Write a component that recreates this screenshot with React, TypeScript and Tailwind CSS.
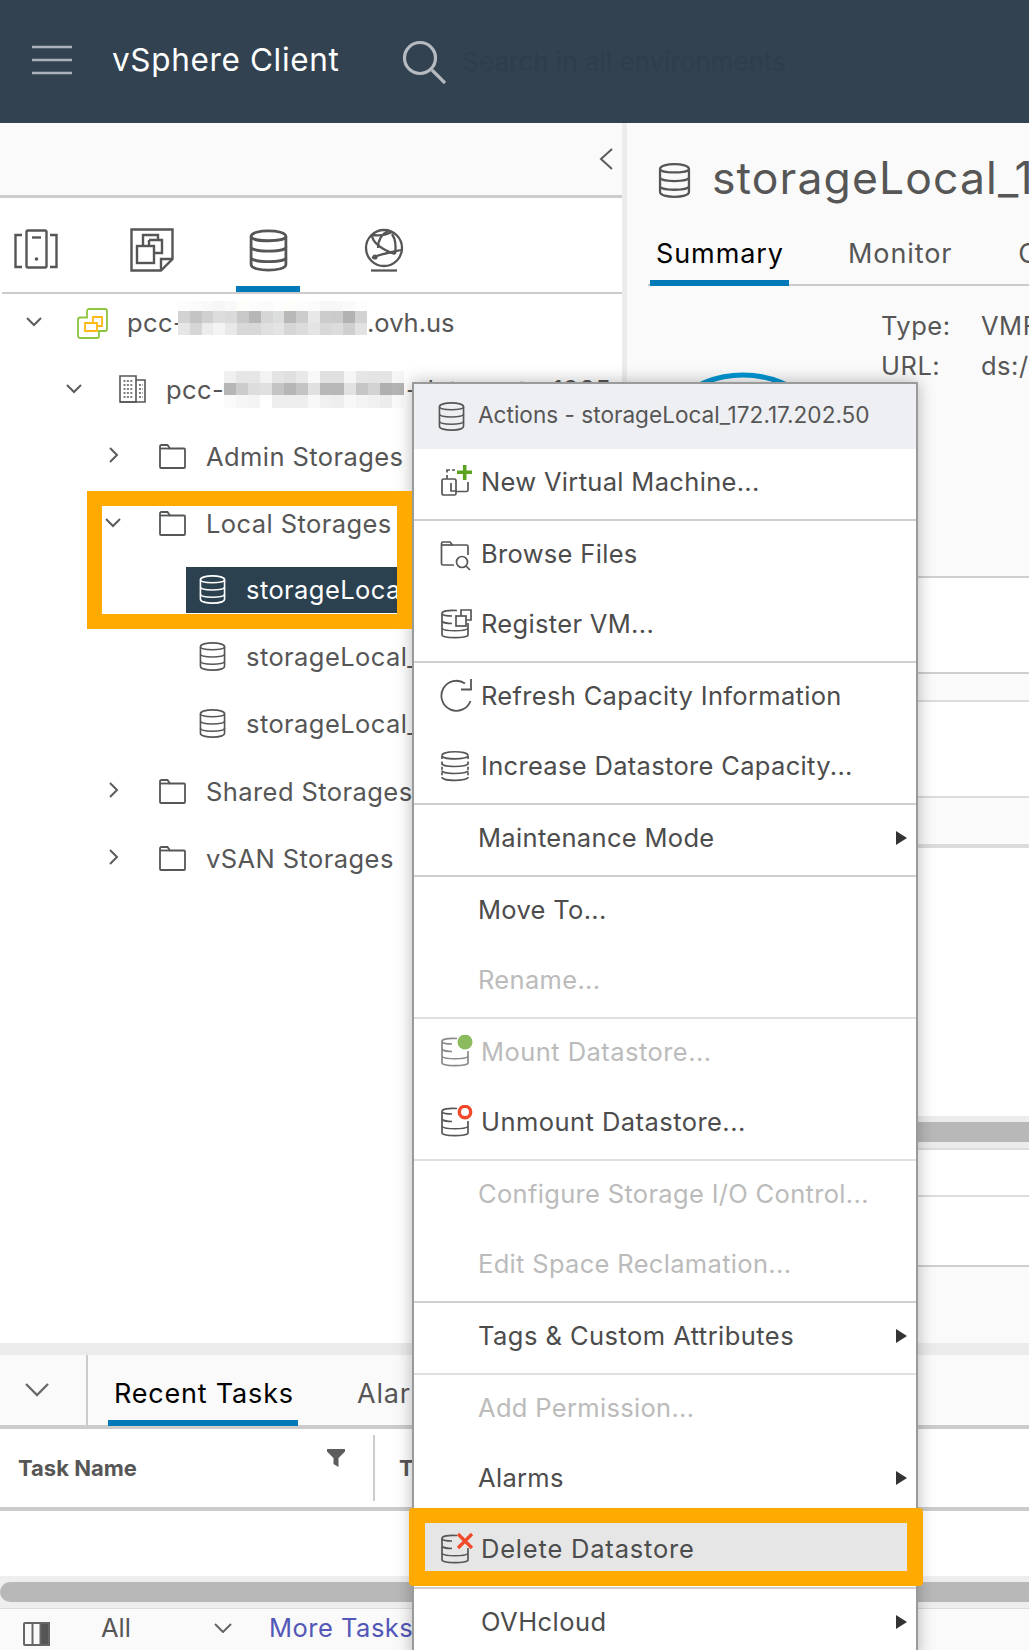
import React from "react";

const G = "#565656";

function Chevron({ dir, className }: { dir: "down" | "right" | "left"; className?: string }) {
  const pts = dir === "down" ? "3,7 10,14 17,7" : dir === "right" ? "7,3 14,10 7,17" : "15,1 4,11 15,21";
  return (
    <svg viewBox="0 0 20 22" className={className} fill="none" stroke="#5c5c5c" strokeWidth="2">
      <polyline points={pts} />
    </svg>
  );
}

function Db({ className, color = G, sw = 2 }: { className?: string; color?: string; sw?: number }) {
  return (
    <svg viewBox="0 0 28 32" className={className} fill="none" stroke={color} strokeWidth={sw}>
      <path d="M1.5 6C1.5 0.5 26.5 0.5 26.5 6V26C26.5 31.5 1.5 31.5 1.5 26Z" />
      <path d="M1.5 6C1.5 10 26.5 10 26.5 6" />
      <path d="M1.5 13.5C1.5 17.5 26.5 17.5 26.5 13.5" />
      <path d="M1.5 21C1.5 25 26.5 25 26.5 21" />
    </svg>
  );
}

function Folder({ className }: { className?: string }) {
  return (
    <svg viewBox="0 0 27 25" className={className} fill="none" stroke={G} strokeWidth="1.8">
      <path d="M1 2.5C1 1.5 1.5 1 2.5 1H8.5L11 4.5H25C25.6 4.5 26 5 26 5.5V23C26 23.6 25.6 24 25 24H2C1.4 24 1 23.6 1 23Z" />
      <path d="M1 4.5H11" />
    </svg>
  );
}

function Mosaic({ rows, widths, cell, className }: { rows: string[][]; widths: number[]; cell: number; className?: string }) {
  let y = 0;
  const total = widths.reduce((a, b) => a + b, 0);
  return (
    <svg viewBox={`0 0 ${rows[0].length * cell} ${total}`} className={className} shapeRendering="crispEdges">
      {rows.map((r, ri) => {
        const top = y;
        y += widths[ri];
        return r.map((c, ci) => <rect key={`${ri}-${ci}`} x={ci * cell} y={top} width={cell} height={widths[ri]} fill={c} />);
      })}
    </svg>
  );
}

const mosaicA = [
  ["#fcfcfc","#fbfbfb","#f9f9f9","#f6f6f6","#f9f9f9","#fdfdfa","#fcfcfc","#fbfbfb","#fdfdfd","#fdfdfa","#fcfcfc","#fbfbfb","#f7f7f7","#f8f8f8","#fafafa","#fdfdfd"],
  ["#d2d2d2","#c4c4c4","#d0d0d0","#dddddd","#dadada","#c8c8c8","#b6b6b6","#d6d6d6","#dcdede","#b8b8b8","#cccccc","#e8e8e8","#cccccc","#cbcbcb","#b2b2b2","#d2d2d2"],
  ["#e6e6e6","#d6d6d6","#ececec","#f4f4f4","#e8e8e8","#d8d8d8","#d8d8d8","#e0e0e0","#e4e4e4","#d6d6d6","#dcdcdc","#e4e4e4","#d8d8d8","#dcdcdc","#cfcfcf","#e2e2e2"],
];
const mosaicB = [
  ["#f0f0f0","#e6e6e6","#e6e6e6","#f3f3f3","#e4e4e4","#e0e0e0","#e8e8e8","#f8f8f8","#e0e0e0","#e0e0e0","#f6f6f6","#e6e6e6","#e4e4e4","#e4e4e4","#f6f6f6"],
  ["#b6b6b6","#cccccc","#dddddd","#e0e0e0","#c4c4c4","#b6b6b6","#c4c4c4","#e0e0e0","#b8b8b8","#b8b8b8","#e2e2e2","#c6c6c6","#d2d2d2","#b0b0b0","#b4b4b4"],
  ["#fafafa","#f6f6f6","#f4f4f4","#ffffff","#eeeeee","#eeeeee","#eeeeee","#f8f8f8","#f0f0f0","#eeeeee","#f8f8f8","#f4f4f4","#f0f0f0","#ececec","#fafafa"],
];

function TreeRow({ pad, gapA, gapB, chevron, icon, children }: { pad: string; gapA: string; gapB: string; chevron?: "down" | "right"; icon: React.ReactNode; children: React.ReactNode }) {
  return (
    <div className={`h-[67px] flex items-center whitespace-nowrap text-[25.5px] tracking-[0.42px] text-[#565656] ${pad}`}>
      <div className="w-[20px] h-[22px] shrink-0">{chevron && <Chevron dir={chevron} className="w-[20px] h-[22px]" />}</div>
      <div className={`shrink-0 ${gapA}`}>{icon}</div>
      <div className={`mt-[4px] ${gapB}`}>{children}</div>
    </div>
  );
}

function Arrow() {
  return (
    <svg viewBox="0 0 11 14" className="w-[11px] h-[14px] absolute right-[9px] top-[26px]" fill="#333">
      <polygon points="0,0 11,7 0,14" />
    </svg>
  );
}

function Item({ label, icon, disabled, arrow, wide }: { label: string; icon?: React.ReactNode; disabled?: boolean; arrow?: boolean; wide?: boolean }) {
  return (
    <div className={`relative h-[70px] pb-[4px] flex items-center whitespace-nowrap text-[25.5px] ${wide ? "tracking-[0.45px]" : "tracking-[0.32px]"} ${disabled ? "text-[#bbbbbb]" : "text-[#4c4c4c]"} ${icon ? "pl-[26px]" : "pl-[64px]"}`}>
      {icon && <div className="w-[34px] mr-[7px] shrink-0 flex items-center">{icon}</div>}
      <span>{label}</span>
      {arrow && <Arrow />}
    </div>
  );
}

function Sep({ light }: { light?: boolean }) {
  return <div className={`h-[2px] ${light ? "bg-[#e0e0e0]" : "bg-[#cfcfcf]"}`} />;
}

function DbBase({ children, dim }: { children?: React.ReactNode; dim?: boolean }) {
  const c = dim ? "#8a8a8a" : G;
  return (
    <svg viewBox="0 0 34 34" className="w-[34px] h-[34px]" fill="none" stroke={c} strokeWidth="1.7">
      <path d="M17 3.5C8 2.8 2 4 2 6.5V28C2 31.5 28 31.5 28 28V16" />
      <path d="M2 7C3 8.4 7 9 12 9" />
      <path d="M2 14.5C4 16 8 16.5 12 16.5" />
      <path d="M2 21.5C5 24.5 25 24.5 28 21.5" />
      {children}
    </svg>
  );
}

function IconNew() {
  return (
    <svg viewBox="0 0 34 34" className="w-[34px] h-[34px]" fill="none" stroke={G} strokeWidth="1.7">
      <path d="M2 16C2 15 2.5 14 4 14H14.5C15.5 14 16 15 16 16V28.5C16 29.5 15.5 30 14.5 30H4C3 30 2 29.5 2 28.5Z" />
      <path d="M7 14V10M7 7.5V5H10M12 5H15" />
      <path d="M28 17V25C28 26 27.5 26.5 26.5 26.5H16" />
      <path d="M11 18V26H16" />
      <path d="M24.7 0V15M17 7.3H32" stroke="#5aa220" strokeWidth="3.6" />
    </svg>
  );
}

function IconBrowse() {
  return (
    <svg viewBox="0 0 34 34" className="w-[34px] h-[34px]" fill="none" stroke={G} strokeWidth="1.7">
      <path d="M14 28H3C2 28 1.5 27.5 1.5 26.5V6.5C1.5 5.5 2 5 3 5H10L12.5 8H26.5C27.5 8 28 8.5 28 9.5V18" />
      <path d="M1.5 8H12.5" />
      <circle cx="22" cy="25" r="5.5" />
      <path d="M26 29L30 33" />
    </svg>
  );
}

function IconRegister() {
  return (
    <DbBase>
      <rect x="16" y="9" width="10" height="10" fill="#fff" />
      <path d="M21 9V3H31V13H26" />
    </DbBase>
  );
}

function IconRefresh() {
  return (
    <svg viewBox="0 0 34 34" className="w-[34px] h-[34px]" fill="none" stroke={G} strokeWidth="1.8">
      <path d="M25 4.5A15 15 0 1 0 30.5 22" />
      <path d="M31 0V10.5H21" />
    </svg>
  );
}

function IconIncrease() {
  return (
    <svg viewBox="0 0 34 34" className="w-[34px] h-[34px]" fill="none" stroke={G} strokeWidth="1.7">
      <path d="M2 6.5C2 1.5 28 1.5 28 6.5" />
      <path d="M2 6.5C2 11 28 11 28 6.5" />
      <path d="M2 14.5C2 18.5 28 18.5 28 14.5" />
      <path d="M2 21.5C2 25.5 28 25.5 28 21.5" />
      <path d="M2 28C2 32.5 28 32.5 28 28" />
      <path d="M2 7V28M28 7V28" strokeDasharray="3 2.4" />
    </svg>
  );
}

function IconTree({ kind }: { kind: "hosts" | "vms" }) {
  if (kind === "hosts")
    return (
      <svg viewBox="0 0 44 40" className="w-[44px] h-[40px]" fill="none" stroke={G} strokeWidth="2.4">
        <rect x="12.5" y="1.5" width="20" height="37" rx="1.5" />
        <path d="M18 8.5H27" />
        <circle cx="22.5" cy="30" r="1.8" fill={G} stroke="none" />
        <path d="M8 6H1.5V38H8" />
        <path d="M36 6H42.5V38H36" />
      </svg>
    );
  return (
    <svg viewBox="0 0 44 44" className="w-[44px] h-[44px]" fill="none" stroke={G} strokeWidth="2.4">
      <path d="M1.5 1.5H42.5V31L31 42.5H1.5Z" />
      <path d="M31 42.5V31H42.5" />
      <rect x="7" y="18" width="17" height="17" />
      <path d="M13 18V7H28V12" />
      <path d="M19 12H32V25H24" />
      <path d="M19 12V18" />
    </svg>
  );
}

function IconGlobe() {
  return (
    <svg viewBox="0 0 40 44" className="w-[40px] h-[44px]" fill="none" stroke={G} strokeWidth="2.3">
      <circle cx="20" cy="20" r="18" />
      <path d="M8 7C14 8 22 7 28 4" />
      <path d="M8 7C8 14 18 22 31 26" />
      <path d="M24 3C18 6 14 12 14 20" />
      <path d="M37 22C28 24 16 26 8 30" />
      <path d="M28 6C32 12 32 20 31 26" />
      <circle cx="11" cy="29" r="2.6" fill={G} stroke="none" />
      <path d="M7 42.5H33" />
    </svg>
  );
}

function IconVc() {
  return (
    <svg viewBox="0 0 31 31" className="w-[31px] h-[31px]" fill="none" strokeWidth="1.8">
      <path d="M10 9.5V3C10 2 11 1 12 1H28C29 1 30 2 30 3V21C30 22 29 23 28 23H22V28C22 29 21 30 20 30H3C2 30 1 29 1 28V11.5C1 10.5 2 9.5 3 9.5Z" stroke="#8cc63f" />
      <path d="M16 15V9H25V18H20V23H8V15Z" stroke="#fdb913" />
      <path d="M16 15H20V18" stroke="#fdb913" />
    </svg>
  );
}

function IconDc() {
  return (
    <svg viewBox="0 0 27 29" className="w-[27px] h-[29px]" fill="none" stroke={G} strokeWidth="1.6">
      <path d="M1 28V2H17V28Z" />
      <path d="M17 6H26V28H1" />
      <path d="M4.5 7H14M4.5 11H14M4.5 15H14M4.5 19H14M4.5 23H14M20 11H24M20 15H24M20 19H24M20 23H24" strokeDasharray="2 1.4" />
    </svg>
  );
}

export default function App() {
  return (
    <div className="relative w-[1029px] h-[1650px] overflow-hidden bg-white font-['Inter','Liberation_Sans',sans-serif]">
      <header className="h-[123px] bg-[#324251] flex items-center">
        <svg viewBox="0 0 40 30" className="w-[40px] h-[30px] ml-[32px] mt-[-4px] shrink-0" stroke="#a9b2ba" strokeWidth="2.6">
          <path d="M0 2H40M0 15H40M0 28H40" />
        </svg>
        <span className="ml-[40px] text-[31.5px] tracking-[0.65px] text-white mt-[-4px]">vSphere Client</span>
        <svg viewBox="0 0 44 44" className="w-[44px] h-[44px] ml-[63px] shrink-0" fill="none" stroke="#b5bbc1" strokeWidth="3.2">
          <circle cx="18" cy="18" r="15.5" />
          <path d="M30 30L43 43" />
        </svg>
        <span className="ml-[16px] text-[26px] text-[#303d4a] mt-[-1px] whitespace-nowrap">Search in all environments</span>
      </header>

      <div className="h-[1220px] flex">
        <div className="w-[622px] shrink-0">
          <div className="h-[75px] bg-[#fafafa] border-b-[3px] border-[#cccccc] flex items-center justify-end pr-[5px]">
            <Chevron dir="left" className="w-[20px] h-[24px] mt-[-1px]" />
          </div>
          <div className="h-[96px] ml-[2px] border-b-[2px] border-[#cccccc] flex items-start pt-[31px] text-[#565656] relative">
            <div className="ml-[12px]"><IconTree kind="hosts" /></div>
            <div className="ml-[72px] mt-[-1px]"><IconTree kind="vms" /></div>
            <div className="ml-[62px] mt-[-1px] border-b-[6px] border-[#0079b8] w-[64px] h-[64px] flex justify-center">
              <Db className="w-[39px] h-[45px]" sw={2} />
            </div>
            <div className="ml-[64px] mt-[-1px]"><IconGlobe /></div>
          </div>
          <div className="mt-[-6px] relative">
            <TreeRow pad="pl-[24px]" gapA="ml-[33px] mt-[4px]" gapB="ml-[19px]" chevron="down" icon={<IconVc />}>
              <div className="flex items-center">
                <span className="w-[51px]">pcc-</span>
                <Mosaic rows={mosaicA} widths={[10, 12, 12]} cell={12} className="w-[189px] h-[34px] mt-[-11px]" />
                <span className="tracking-normal">.ovh.us</span>
              </div>
            </TreeRow>
            <TreeRow pad="pl-[64px]" gapA="ml-[35px]" gapB="ml-[20px]" chevron="down" icon={<IconDc />}>
              <div className="flex items-center">
                <span className="w-[55px]">pcc-</span>
                <Mosaic rows={mosaicB} widths={[12, 12, 13]} cell={12} className="w-[185px] h-[37px] mt-[-2px]" />
                <span>-datacenter1985</span>
              </div>
            </TreeRow>
            <TreeRow pad="pl-[103px]" gapA="ml-[36px] mt-[2px]" gapB="ml-[20px]" chevron="right" icon={<Folder className="w-[27px] h-[25px]" />}>Admin Storages</TreeRow>
            <TreeRow pad="pl-[103px]" gapA="ml-[36px] mt-[2px]" gapB="ml-[20px]" chevron="down" icon={<Folder className="w-[27px] h-[25px]" />}>Local Storages</TreeRow>
            <div className="h-[67px] flex items-center pl-[186px]">
              <div className="h-[46px] flex-1 bg-[#2b4150] flex items-center pl-[13px] text-[25.5px] tracking-[0.42px] text-white whitespace-nowrap">
                <Db className="w-[27px] h-[31px]" color="#ffffff" sw={1.7} />
                <span className="ml-[20px] mt-[2px]">storageLocal_172.17.202.50</span>
              </div>
            </div>
            <div className="h-[67px] flex items-center pl-[199px] text-[25.5px] tracking-[0.42px] text-[#565656] whitespace-nowrap">
              <Db className="w-[27px] h-[31px]" sw={1.7} />
              <span className="ml-[20px] mt-[2px]">storageLocal_172.17.202.51</span>
            </div>
            <div className="h-[67px] flex items-center pl-[199px] text-[25.5px] tracking-[0.42px] text-[#565656] whitespace-nowrap">
              <Db className="w-[27px] h-[31px]" sw={1.7} />
              <span className="ml-[20px] mt-[2px]">storageLocal_172.17.202.52</span>
            </div>
            <TreeRow pad="pl-[103px]" gapA="ml-[36px] mt-[2px]" gapB="ml-[20px]" chevron="right" icon={<Folder className="w-[27px] h-[25px]" />}>Shared Storages</TreeRow>
            <TreeRow pad="pl-[103px]" gapA="ml-[36px] mt-[2px]" gapB="ml-[20px]" chevron="right" icon={<Folder className="w-[27px] h-[25px]" />}>vSAN Storages</TreeRow>
          </div>
        </div>

        <div className="w-[5px] bg-[#ececec] shrink-0" />

        <div className="flex-1 min-w-0 bg-[#fafafa] overflow-hidden">
          <div className="h-[114px] flex items-center pl-[31px] whitespace-nowrap">
            <Db className="w-[33px] h-[37px] shrink-0" sw={2} />
            <span className="ml-[21px] mt-[-4px] text-[44.5px] tracking-[1.1px] text-[#565656]">storageLocal_172.17.202.50</span>
          </div>
          <div className="h-[49px] ml-[21px] border-b-[2px] border-[#cccccc] flex items-stretch whitespace-nowrap text-[27px] tracking-[0.9px] text-[#565656]">
            <div className="w-[139px] shrink-0 ml-[2px] h-[49px] border-b-[6px] border-[#0079b8] pl-[6px] text-black"><div className="mt-[-3px]">Summary</div></div>
            <div className="ml-[59px] mt-[-3px] shrink-0">Monitor</div>
            <div className="ml-[66px] mt-[-3px] shrink-0">Configure</div>
          </div>
          <div className="h-[290px] flex whitespace-nowrap">
            <svg viewBox="0 0 212 212" className="w-[212px] h-[212px] ml-[10px] mt-[86px] shrink-0" fill="none" stroke="#0095d3" strokeWidth="5">
              <circle cx="106" cy="106" r="103" />
            </svg>
            <div className="ml-[32px] mt-[20px] text-[25.5px] tracking-[0.5px] text-[#565656]">
              <div className="h-[40px] flex items-center"><span className="w-[100px]">Type:</span><span>VMFS 6</span></div>
              <div className="h-[40px] flex items-center"><span className="w-[100px]">URL:</span><span>ds:///vmfs/volumes/</span></div>
            </div>
          </div>
          <div className="h-[98px] bg-white border-y-[2px] border-[#cfcfcf]" />
          <div className="h-[26px]" />
          <div className="h-[98px] bg-white border-y-[2px] border-[#dcdcdc]" />
          <div className="h-[46px]" />
          <div className="h-[272px] bg-white border-t-[4px] border-[#dcdcdc]" />
          <div className="h-[32px] bg-[#ececec] flex items-center">
            <div className="h-[20px] w-full bg-[#b8b8b8]" />
          </div>
          <div className="h-[47px] bg-white border-t-[2px] border-[#dcdcdc]" />
          <div className="h-[70px] bg-white border-t-[2px] border-[#dcdcdc]" />
          <div className="h-[78px] border-t-[2px] border-[#cfcfcf]" />
        </div>
      </div>

      <div className="h-[12px] bg-[#ebebeb]" />
      <div className="h-[74px] bg-[#fafafa] border-b-[4px] border-[#cccccc] flex whitespace-nowrap">
        <div className="w-[88px] border-r-[2px] border-[#cccccc] flex items-center justify-center pr-[12px]">
          <svg viewBox="0 0 24 14" className="w-[24px] h-[14px]" fill="none" stroke="#6a6a6a" strokeWidth="2.4"><polyline points="1,1 12,12 23,1" /></svg>
        </div>
        <div className="ml-[20px] w-[190px] h-[71px] border-b-[6px] border-[#0079b8] pl-[6px] pt-[19px] text-[27px] tracking-[0.8px] text-black">Recent Tasks</div>
        <div className="ml-[59px] pt-[19px] text-[27px] tracking-[0.8px] text-[#565656]">Alarms</div>
      </div>
      <div className="h-[82px] border-b-[4px] border-[#cccccc] flex items-center whitespace-nowrap">
        <span className="ml-[18px] w-[309px] text-[22px] font-bold text-[#565656]">Task Name</span>
        <svg viewBox="0 0 18 18" className="w-[18px] h-[18px] mt-[-20px]" fill="#5c5c5c"><path d="M0 0H18V2.5L11.5 9V18L6.5 15V9L0 2.5Z" /></svg>
        <div className="ml-[28px] w-[2px] h-[66px] bg-[#cccccc]" />
        <span className="ml-[24px] text-[22px] font-bold text-[#565656]">Target</span>
      </div>
      <div className="h-[65px]" />
      <div className="h-[32px] bg-[#eeeeee] flex items-center">
        <div className="h-[20px] w-full rounded-l-full bg-[#b8b8b8]" />
      </div>
      <div className="h-[42px] bg-[#fafafa] border-t-[1px] border-[#dcdcdc] flex whitespace-nowrap relative">
        <svg viewBox="0 0 27 24" className="w-[27px] h-[24px] ml-[23px] mt-[13px] shrink-0" fill="none" stroke="#666" strokeWidth="2">
          <rect x="1" y="1" width="25" height="22" rx="1" />
          <path d="M9.5 1V23" />
          <rect x="17.5" y="1" width="8.5" height="22" fill="#555" />
        </svg>
        <span className="ml-[51px] text-[25.5px] text-[#565656]">All</span>
        <svg viewBox="0 0 18 10" className="w-[18px] h-[10px] ml-[83px] mt-[14px] shrink-0" fill="none" stroke="#666" strokeWidth="2"><polyline points="1,1 9,9 17,1" /></svg>
        <span className="ml-[37px] text-[25.5px] tracking-[0.5px] text-[#5257b8]">More Tasks</span>
      </div>

      <div className="absolute left-[412px] top-[382px] w-[506px] border-x-[2px] border-t-[2px] border-[#9a9a9a] bg-white shadow-[0_0_16px_rgba(0,0,0,0.28)]">
        <div className="h-[65px] bg-[#eeeff3] flex items-center pl-[24px] whitespace-nowrap text-[22.6px] text-[#565656]">
          <Db className="w-[27px] h-[31px] shrink-0" sw={1.7} />
          <span className="ml-[13px] mt-[-4px]">Actions - storageLocal_172.17.202.50</span>
        </div>
        <Item label="New Virtual Machine..." icon={<IconNew />} />
        <Sep />
        <Item label="Browse Files" icon={<IconBrowse />} />
        <Item label="Register VM..." icon={<IconRegister />} />
        <Sep />
        <Item label="Refresh Capacity Information" icon={<IconRefresh />} />
        <Item label="Increase Datastore Capacity..." icon={<IconIncrease />} />
        <Sep />
        <Item label="Maintenance Mode" arrow />
        <Sep />
        <Item label="Move To..." />
        <Item label="Rename..." disabled />
        <Sep light />
        <Item label="Mount Datastore..." wide disabled icon={<DbBase dim><circle cx="25" cy="7" r="7.5" fill="#8cba5f" stroke="none" /></DbBase>} />
        <Item label="Unmount Datastore..." wide icon={<DbBase><circle cx="25" cy="7" r="5.7" fill="#fff" stroke="#f1492a" strokeWidth="3.4" /></DbBase>} />
        <Sep light />
        <Item label="Configure Storage I/O Control..." disabled />
        <Item label="Edit Space Reclamation..." disabled />
        <Sep />
        <Item label="Tags &amp; Custom Attributes" wide arrow />
        <Sep light />
        <Item label="Add Permission..." disabled />
        <Item label="Alarms" arrow />
        <Sep />
        <div className="h-[70px]" />
        <Sep />
        <div className="relative h-[70px] pb-[4px] flex items-center pl-[67px] whitespace-nowrap text-[25.5px] tracking-[0.45px] text-[#4c4c4c]">
          <span>OVHcloud</span>
          <Arrow />
        </div>
      </div>

      <div className="absolute left-[87px] top-[491px] w-[325px] h-[138px] border-[15px] border-[#ffaa00]" />
      <div className="absolute left-[409px] top-[1508px] w-[514px] h-[78px] rounded-[4px] border-y-[15px] border-x-[16px] border-[#ffaa00] flex items-center pl-[15px] pt-[4px] bg-[#e6e6e6] whitespace-nowrap text-[25.5px] tracking-[0.8px] text-[#4c4c4c]">
        <div className="w-[34px] mr-[7px] shrink-0 flex items-center">
          <DbBase><path d="M18 2L32 16M32 2L18 16" stroke="#f1492a" strokeWidth="3.2" /></DbBase>
        </div>
        <span>Delete Datastore</span>
      </div>
    </div>
  );
}
